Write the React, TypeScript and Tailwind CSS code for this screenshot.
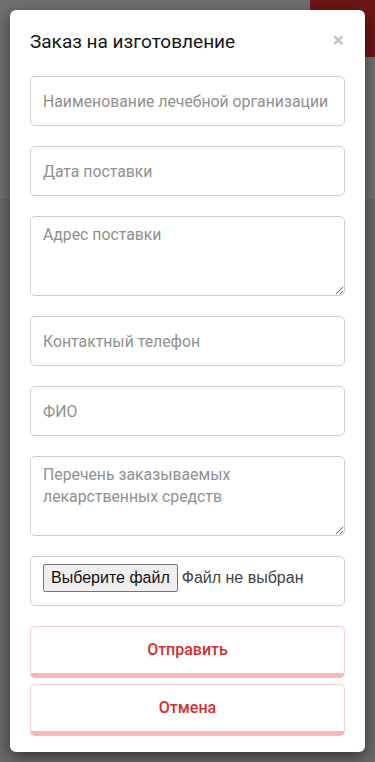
import React from 'react'

const font = { fontFamily: 'Roboto, "Noto Sans", Arial, sans-serif' }

function Field({ placeholder }: { placeholder: string }) {
  return (
    <input
      placeholder={placeholder}
      className="h-[50px] w-full rounded-[5px] border border-[#cfcfcf] bg-white px-[12px] text-[15.8px] text-[#333] outline-none placeholder:text-[#909090]"
    />
  )
}

function Area({ placeholder }: { placeholder: string }) {
  return (
    <textarea
      placeholder={placeholder}
      className="block h-[80px] w-full resize-y rounded-[5px] border border-[#cfcfcf] bg-white px-[12px] py-[7px] text-[15.8px] leading-[22px] text-[#333] outline-none placeholder:text-[#909090]"
    />
  )
}

export default function App() {
  return (
    <div className="relative h-[762px] w-[375px] overflow-hidden bg-[#6a6a6a]" style={font}>
      {/* dimmed page underneath */}
      <div className="absolute left-0 top-0 h-[197px] w-full bg-[#707070]" />
      <div className="absolute left-0 top-[197px] h-px w-full bg-[#7a7a7a]" />
      <div className="absolute right-0 top-0 h-[57px] w-[65px] bg-[#6e1616]" />

      <div className="relative mx-[10px] mt-[10px] flex h-[742px] flex-col rounded-[6px] bg-white px-[20px] shadow-[0_5px_15px_rgba(0,0,0,0.5)]">
        <div className="flex h-[66px] items-center justify-between">
          <h4 className="-mt-[2px] text-[19px] font-normal text-[#151515]">Заказ на изготовление</h4>
          <span className="-mt-[6px] mr-[1px] text-[21px] font-bold leading-none text-[#c4c4c4]">×</span>
        </div>
        <div className="flex flex-col gap-[20px]">
          <Field placeholder="Наименование лечебной организации" />
          <Field placeholder="Дата поставки" />
          <Area placeholder="Адрес поставки" />
          <Field placeholder="Контактный телефон" />
          <Field placeholder="ФИО" />
          <Area placeholder="Перечень заказываемых лекарственных средств" />
          <div className="flex h-[50px] items-start rounded-[5px] border border-[#cfcfcf] px-[12px] pt-[7px]">
            <label className="flex items-center gap-[4px] text-[16px] text-[#333]" style={{ fontFamily: '"Liberation Sans", Arial, sans-serif' }}>
              <span className="rounded-[2px] border border-[#767676] bg-[#efefef] px-[7px] py-[1px] text-[#111]">Выберите файл</span>
              <span className="text-[#444]">Файл не выбран</span>
            </label>
          </div>
        </div>
        <div className="mt-[20px] flex flex-col gap-[6px]">
          <button className="h-[52px] w-full rounded-[5px] border border-b-[5px] border-[#f6cdcd] border-b-[#f5b9b9] bg-white text-[16px] font-medium text-[#d32f2f]">
            Отправить
          </button>
          <button className="h-[52px] w-full rounded-[5px] border border-b-[5px] border-[#f6cdcd] border-b-[#f5b9b9] bg-white text-[16px] font-medium text-[#d32f2f]">
            Отмена
          </button>
        </div>
      </div>
    </div>
  )
}
